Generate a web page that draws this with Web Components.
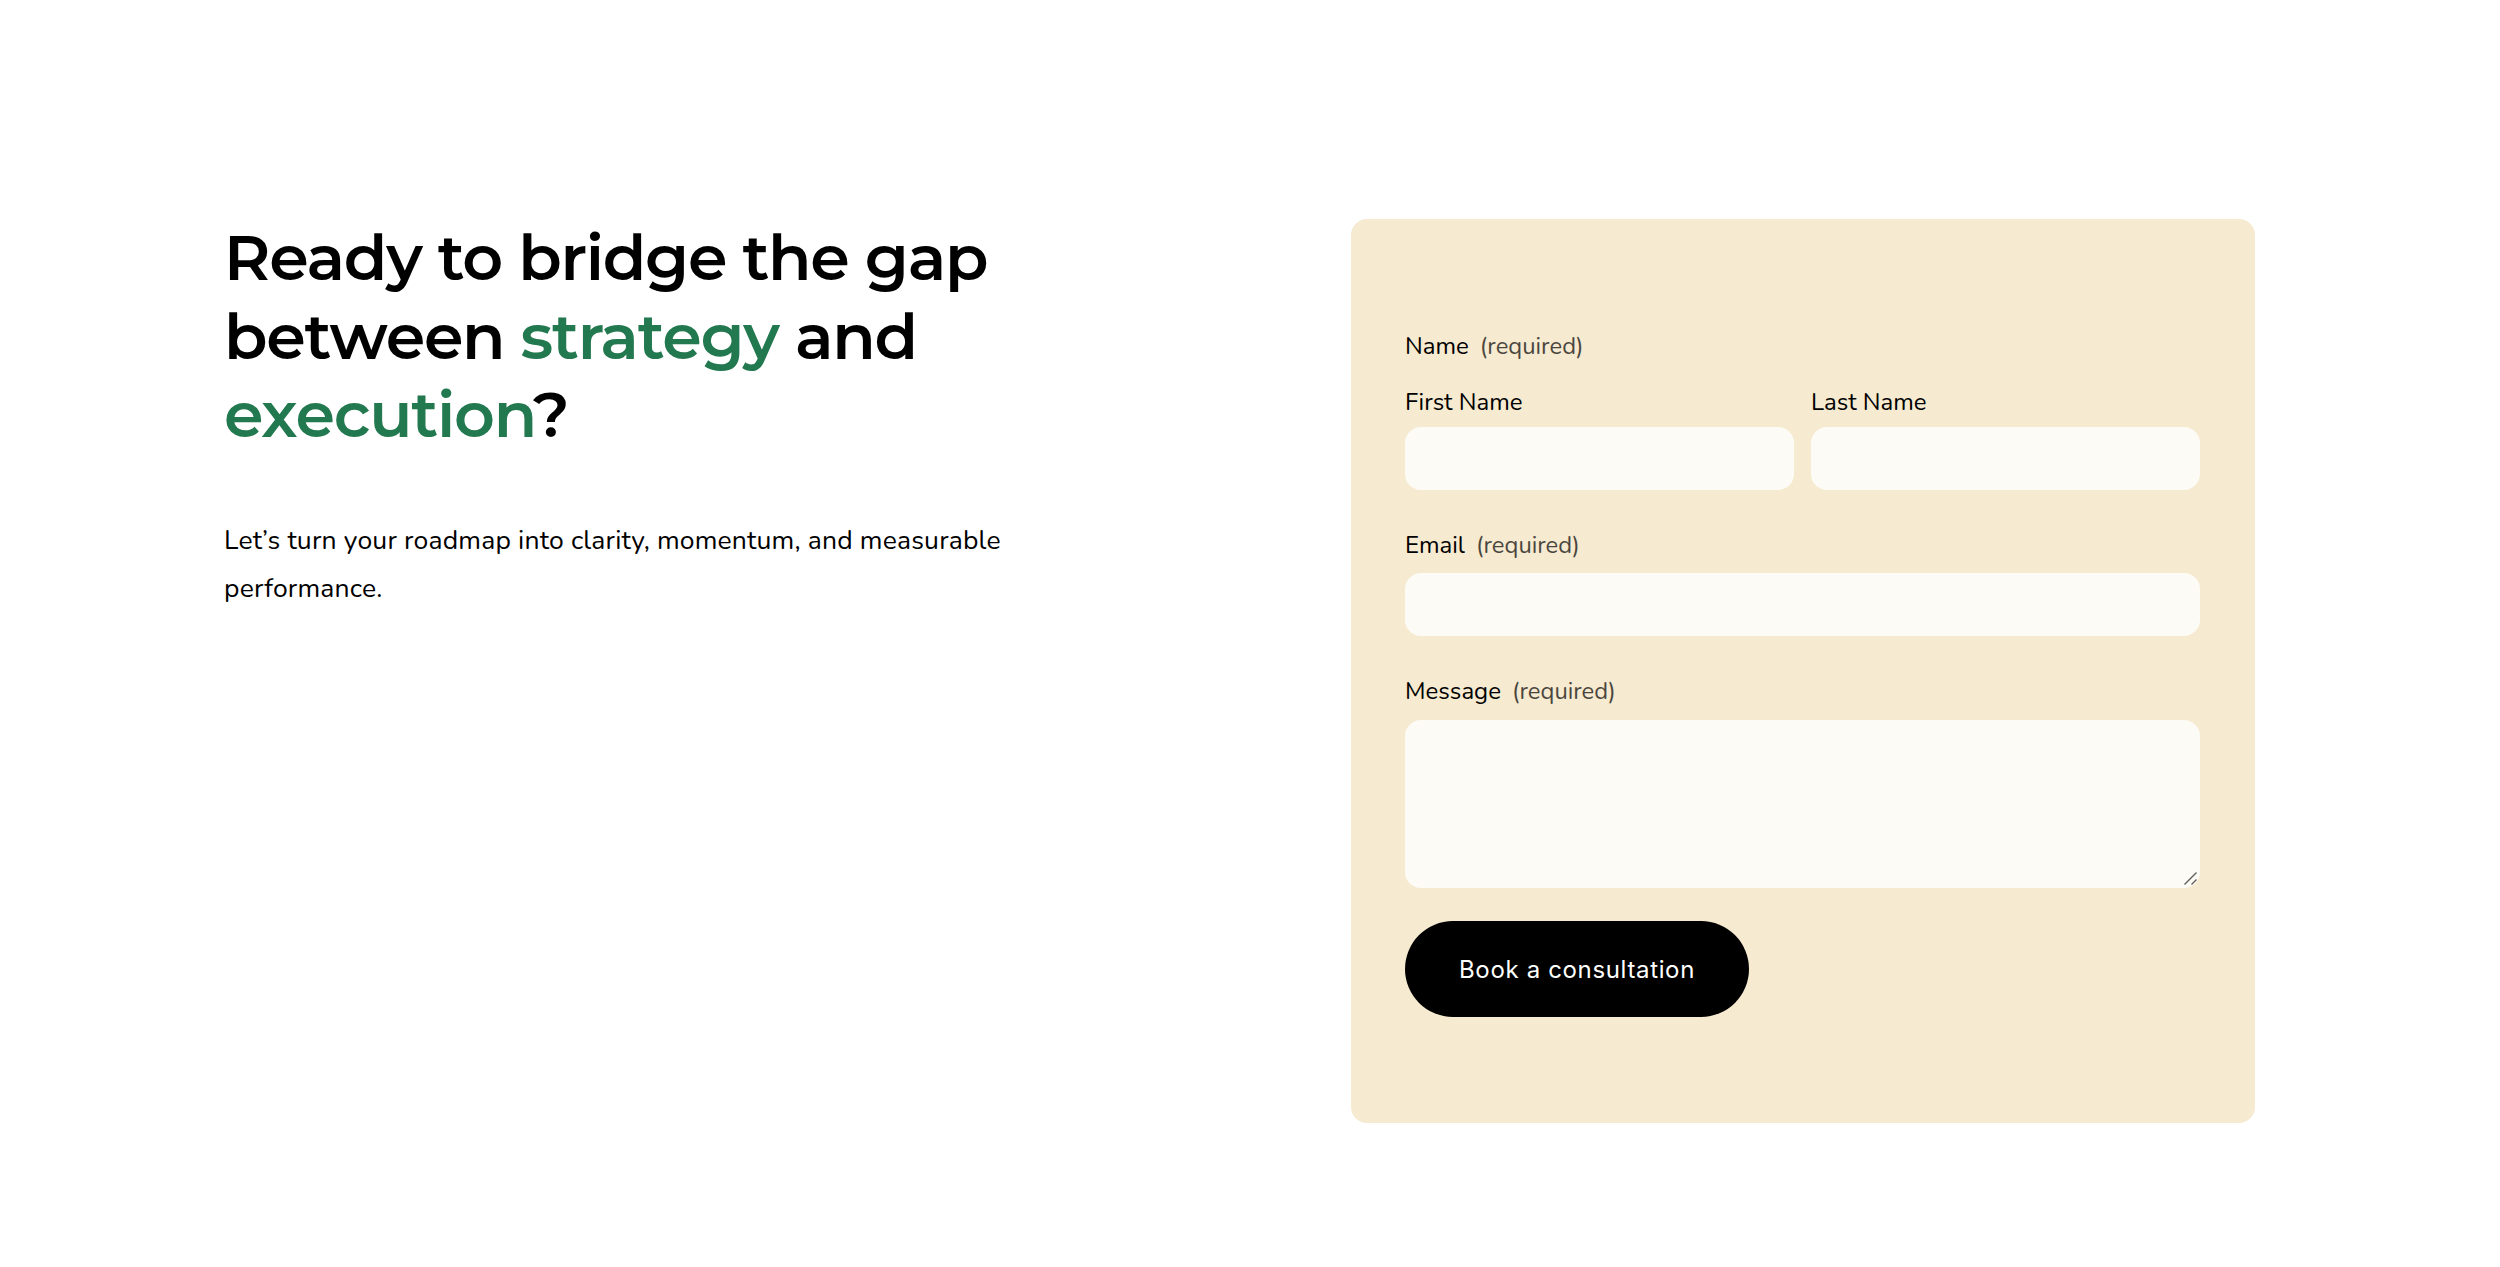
<!DOCTYPE html>
<html lang="en">
<head>
<meta charset="utf-8">
<title>Book a consultation</title>
<style>
  body {
    margin: 0;
    background: #fff;
    color: #000;
    font-family: Nunito, Lato, sans-serif;
  }
</style>
</head>
<body>
<contact-section>
  <section-heading slot="intro">Ready to bridge the gap<br>between <accent-text>strategy</accent-text> and<br><accent-text>execution</accent-text>?</section-heading>
  <p slot="intro">Let’s turn your roadmap into clarity, momentum, and measurable<br>performance.</p>
  <contact-form slot="form"></contact-form>
</contact-section>

<template id="section-template">
  <style>
    :host {
      display: grid;
      grid-template-columns: 904px 904px;
      column-gap: 223px;
      align-items: start;
      box-sizing: border-box;
      min-height: 1267px;
      padding: 219px 0 0 224px;
    }
    ::slotted(p) {
      margin: 61px 0 0;
      font-size: 26.5px;
      line-height: 48px;
      letter-spacing: 0.18px;
    }
  </style>
  <div><slot name="intro"></slot></div>
  <slot name="form"></slot>
</template>

<template id="heading-template">
  <style>
    :host {
      display: block;
      font-family: Montserrat, Inter, sans-serif;
      font-size: 63.5px;
      font-weight: 600;
      line-height: 78.7px;
      letter-spacing: -0.02em;
    }
  </style>
  <slot></slot>
</template>

<!-- inline text, so no whitespace around the slot -->
<template id="accent-template"><style>
    :host {
      color: #22784f;
    }
  </style><slot></slot></template>

<template id="label-template">
  <style>
    :host {
      display: flex;
      gap: 11px;
      font-size: 24px;
      line-height: 38px;
    }
    .required {
      display: none;
      opacity: 0.7;
      font-size: 23.8px;
    }
    :host([required]) .required {
      display: inline;
    }
  </style>
  <slot></slot><span class="required">(required)</span>
</template>

<template id="field-template">
  <style>
    :host {
      display: block;
      --label-gap: 6px;
    }
    :host([required]) {
      --label-gap: 9.3px;
    }
    .control {
      position: relative;
      margin-top: var(--label-gap);
    }
    input, textarea {
      display: block;
      box-sizing: border-box;
      width: 100%;
      height: 63px;
      margin: 0;
      padding: 16px;
      border: 0;
      border-radius: 16px;
      background: #fdfbf6;
      font: inherit;
      resize: none;
      outline: none;
    }
    textarea {
      height: 168px;
    }
    /* resize grip over the textarea corner */
    svg {
      position: absolute;
      right: 2px;
      bottom: 2px;
    }
  </style>
  <field-label></field-label>
  <div class="control"></div>
</template>

<template id="button-template">
  <style>
    :host {
      display: block;
    }
    button {
      display: block;
      width: 344px;
      height: 96px;
      padding: 2px 0 0;
      border: 0;
      border-radius: 48px;
      background: #000;
      color: #fff;
      font: 400 24px/30px Inter, sans-serif;
      letter-spacing: 0.65px;
    }
  </style>
  <button type="button"><slot></slot></button>
</template>

<template id="form-template">
  <style>
    :host {
      display: block;
      box-sizing: border-box;
      height: 904px;
      padding: 108px 55px 0 54px;
      border-radius: 16px;
      background: #f6ead0;
    }
    .row {
      display: grid;
      grid-template-columns: 1fr 1fr;
      gap: 17px;
      margin-top: 18px;
    }
    .email, .message {
      margin-top: 36px;
    }
    pill-button {
      margin-top: 33.4px;
    }
  </style>
  <field-label required>Name</field-label>
  <div class="row">
    <form-field label="First Name"></form-field>
    <form-field label="Last Name"></form-field>
  </div>
  <form-field class="email" label="Email" required></form-field>
  <form-field class="message" label="Message" required multiline></form-field>
  <pill-button>Book a consultation</pill-button>
</template>

<script>
class TemplateElement extends HTMLElement {
  constructor() {
    super();
    const template = document.getElementById(this.constructor.template);
    this.attachShadow({ mode: "open" });
    this.shadowRoot.appendChild(template.content.cloneNode(true));
  }
}

customElements.define("contact-section", class extends TemplateElement {
  static template = "section-template";
});

customElements.define("section-heading", class extends TemplateElement {
  static template = "heading-template";
});

customElements.define("accent-text", class extends TemplateElement {
  static template = "accent-template";
});

customElements.define("field-label", class extends TemplateElement {
  static template = "label-template";
});

customElements.define("pill-button", class extends TemplateElement {
  static template = "button-template";
});

customElements.define("form-field", class extends TemplateElement {
  static template = "field-template";

  connectedCallback() {
    const label = this.shadowRoot.querySelector("field-label");
    label.textContent = this.getAttribute("label");
    label.toggleAttribute("required", this.hasAttribute("required"));

    const control = this.shadowRoot.querySelector(".control");
    control.innerHTML = this.hasAttribute("multiline")
      ? `<textarea></textarea>
         <svg width="15" height="15" fill="none" stroke="#5c5c5a" stroke-width="1.4"><path d="M1.5 13.5 13.5 1.5M8.5 13.5l5-5"/></svg>`
      : `<input type="text">`;
  }
});

customElements.define("contact-form", class extends TemplateElement {
  static template = "form-template";
});
</script>
</body>
</html>
